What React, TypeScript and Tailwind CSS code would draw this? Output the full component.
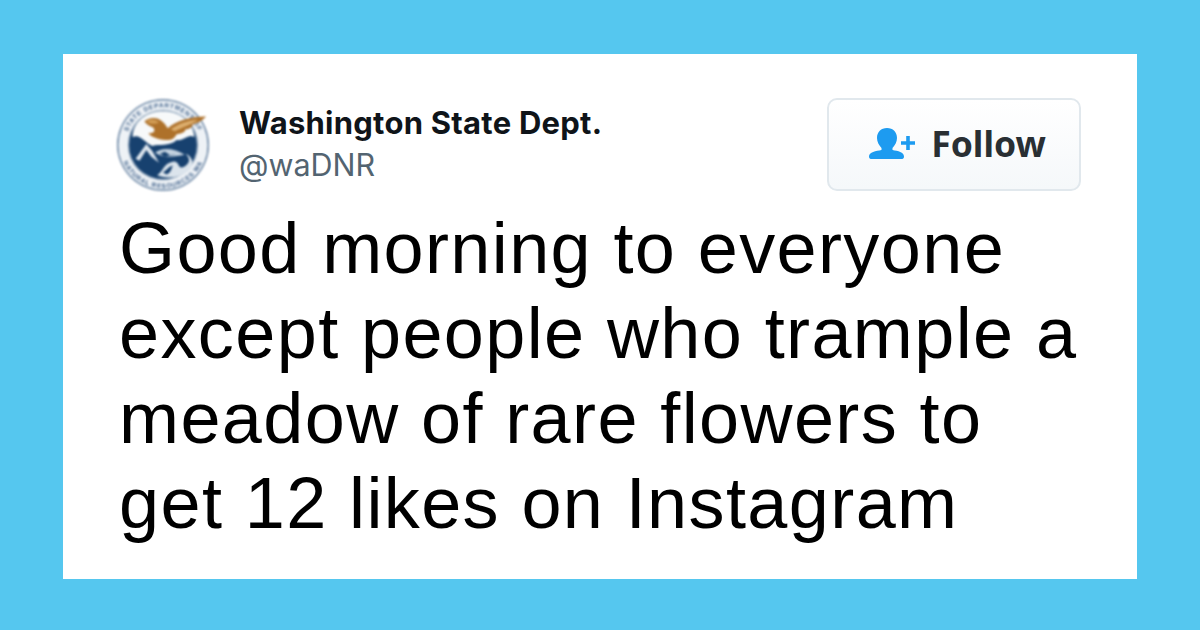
const Seal = () => (
    <svg width="94" height="94" viewBox="0 0 96 96" className="blur-[0.8px]">
        <defs>
            <path id="seal-top" d="M48 48 m-38.500 0 a38.500 38.500 0 1 1 77 0" />
            <path id="seal-bottom" d="M48 48 m-44 0 a44 44 0 0 0 88 0" />
        </defs>
        <circle cx="48" cy="48" r="47" fill="#6d88a6" />
        <circle cx="48" cy="48" r="45.500" fill="#eef2f6" />
        <text fontSize="6.500" fontWeight="700" fill="#3f618a" fontFamily="Liberation Sans, sans-serif" letterSpacing="0.800">
            <textPath href="#seal-top" startOffset="50%" textAnchor="middle">STATE DEPARTMENT OF</textPath>
        </text>
        <text fontSize="6.500" fontWeight="700" fill="#3f618a" fontFamily="Liberation Sans, sans-serif" letterSpacing="0.800">
            <textPath href="#seal-bottom" startOffset="50%" textAnchor="middle">NATURAL RESOURCES WA</textPath>
        </text>
        <circle cx="48" cy="48" r="36" fill="#8ea4bb" />
        <circle cx="48" cy="48" r="34.500" fill="#17416f" />
        <path d="M17 40 C17 24 32 13.500 48 13.500 C64 13.500 79 24 80 40 C74 36 70 44 62 43 C54 50 44 47 37 49 C30 46 24 36 17 40Z" fill="#f7f9fa" />
        <path d="M20 62 L31 47 L37 54 L44 66 L36 60 L31 53 L24 64Z" fill="#dfe7ef" />
        <path d="M40 56 C46 50 60 51 70 58 C60 60 48 62 40 56Z" fill="#c3d2e0" />
        <path d="M45 57 L50 55 L56 59 L62 57 L50 60Z" fill="#17416f" />
        <path d="M42 79 C49 74 48 67 58 65 C66 64 62 74 70 70 C76 66 76 62 71 57 C81 61 81 74 66 79 C58 82 50 82 42 79Z" fill="#dbe4ec" />
        <path d="M48 76 C54 72 54 70 58 69 C56 74 56 76 52 78Z" fill="#17416f" />
        <path d="M29 24 C33 20 41 19 46 23 C49 25 51 28 53 31 C60 24 76 19 92 19 C87 24 83 26 78 27 C79 29 75 32 71 32 C71 35 66 37 62 37 C60 41 57 43 53 43 C46 43 37 41 33 36 C38 36 41 34 38 30 C35 29 31 27 29 24Z" fill="#ae712a" />
        <path d="M56 32 C64 26 74 23 84 22 C78 27 68 30 60 34Z" fill="#dcae6e" />
        <path d="M31 24 C35 21 40 21 44 25 C40 27 35 27 31 24Z" fill="#d19c55" />
    </svg>
)

const FollowIcon = () => (
    <svg width="48" height="33" viewBox="0 0 48 33" fill="#1d9bf0">
        <path d="M20 1 C26 1 30 5 30 11 C30 15 28 18 25.500 21 L25.500 23 C31 24 37 25 37 29.500 C37 31.500 36 32 34 32 L5 32 C3 32 2 31.500 2 29.500 C2 25 9 24 14.500 23 L14.500 21 C12 18 10 15 10 11 C10 5 14 1 20 1Z" />
        <path d="M39.200 9 H42.800 V14.200 H48 V17.800 H42.800 V23 H39.200 V17.800 H34 V14.200 H39.200Z" />
    </svg>
)

const App = () => {
    return (
        <div className="h-[630px] bg-[#55c7ef] px-[63px] pt-[54px] overflow-hidden">
            <div className="bg-white h-[525px] pl-[53px] pr-[56px] pt-[44px]">
                <div className="flex items-start">
                    <Seal />
                    <div className="ml-[29px] flex-1 font-['Inter',sans-serif]">
                        <div className="text-[31px] leading-[50px] font-bold text-[#0f1419] tracking-[0.25px]">Washington State Dept.</div>
                        <div className="text-[30.500px] leading-[36px] text-[#536471] -mt-[1px]">@waDNR</div>
                    </div>
                    <button className="w-[254px] h-[93px] pl-[5px] pb-[2px] rounded-[10px] border-2 border-[#e1e8ed] bg-gradient-to-b from-white to-[#f5f8fa] flex items-center justify-center gap-[16px]">
                        <FollowIcon />
                        <span className="text-[35.500px] font-bold text-[#292f33]">Follow</span>
                    </button>
                </div>
                <p className="mt-[14px] ml-[3px] text-[72px] leading-[85px] tracking-[1.400px] text-black font-['Liberation_Sans',sans-serif] whitespace-nowrap">
                    Good morning to everyone<br />
                    except people who trample a<br />
                    meadow of rare flowers to<br />
                    get 12 likes on Instagram
                </p>
            </div>
        </div>
    )
}

export default App
